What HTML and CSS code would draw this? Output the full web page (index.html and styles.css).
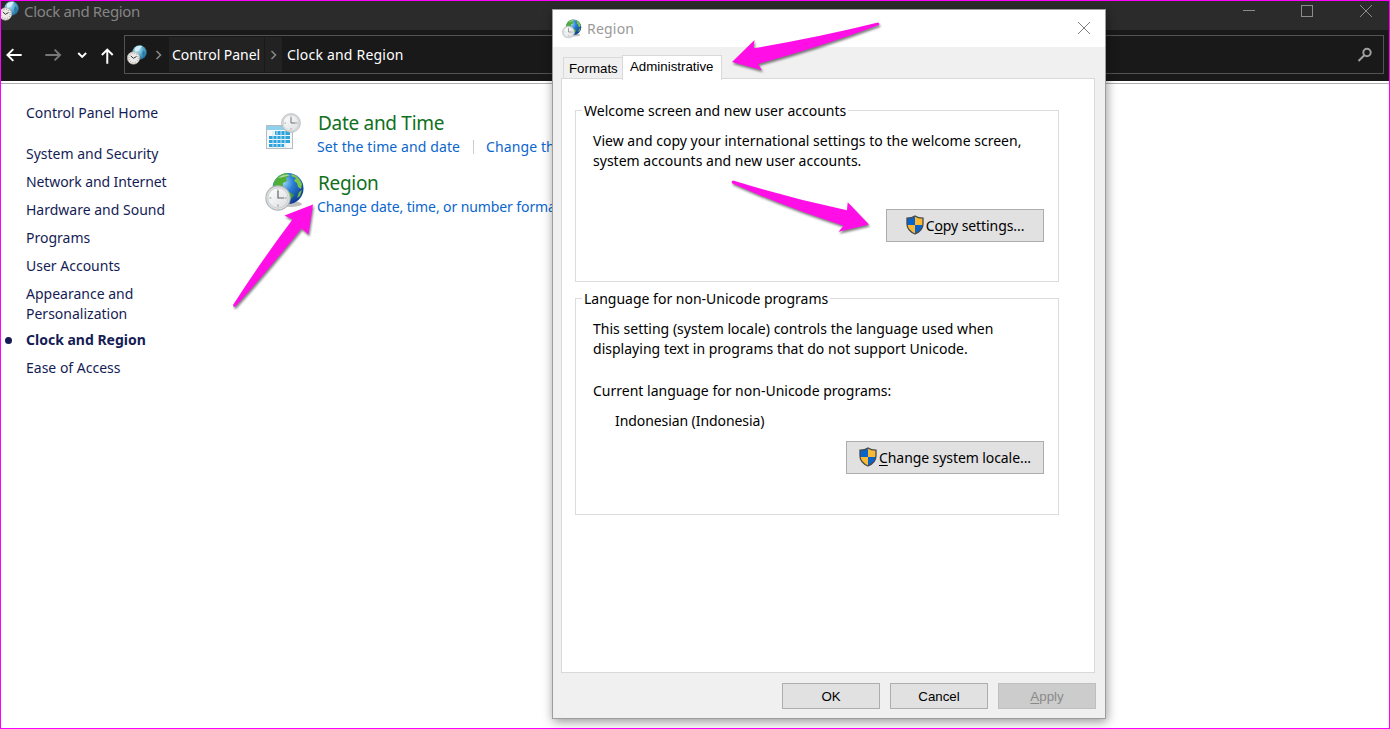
FILE: index.html
```html
<!DOCTYPE html>
<html>
  <head>
    <meta charset="utf-8">
    <title>Clock and Region</title>
    <link rel="stylesheet" href="styles.css">
  </head>
  <body>
    <!-- shared icons -->
    <svg class="icon-defs" width="0" height="0">
      <defs>
        <radialGradient id="sea" cx="0.35" cy="0.3" r="0.8">
          <stop offset="0" stop-color="#9fd8fa"/>
          <stop offset="0.4" stop-color="#2a7fd4"/>
          <stop offset="1" stop-color="#0a2f86"/>
        </radialGradient>
        <radialGradient id="sea-pale" cx="0.35" cy="0.3" r="0.8">
          <stop offset="0" stop-color="#c5e9f5"/>
          <stop offset="0.5" stop-color="#58a9cf"/>
          <stop offset="1" stop-color="#17608c"/>
        </radialGradient>
        <linearGradient id="face" x1="0" y1="0" x2="1" y2="1">
          <stop offset="0" stop-color="#ffffff"/>
          <stop offset="1" stop-color="#dcdee0"/>
        </linearGradient>
        <symbol id="clock" viewBox="0 0 24 24">
          <circle cx="12" cy="12" r="11.2" fill="#dcdedf" stroke="#b0b3b5" stroke-width="1"/>
          <circle cx="12" cy="12" r="9.2" fill="url(#face)" stroke="#c5c8ca" stroke-width="0.6"/>
          <path d="M12 4v2M12 18v2M4 12h2M18 12h2" stroke="#999" stroke-width="1"/>
          <path d="M12 5.5V12h5.500" fill="none" stroke="#666" stroke-width="1.100"/>
        </symbol>
        <symbol id="globe" viewBox="0 0 40 40">
          <ellipse cx="25" cy="32" rx="12" ry="3" fill="#000" opacity="0.25"/>
          <circle cx="23" cy="16.500" r="15.500" fill="url(#sea)"/>
          <path d="M9 10c3-6 8-8.500 13-9l2 3-3 2 1 3-4 2 0 4-4 2-3-1-2 3c-1-3-1-6 0-9z" fill="#4fae36"/>
          <path d="M27 2c5 1.500 8 5 10 10l-1 5-3-2-1-4-3-2 2-3-5-2z" fill="#7bc549"/>
          <path d="M20 21l5-1 4 3-3 4-2 3-3 1-2-5z" fill="#3f9d3a"/>
          <path d="M34 20l3-2-2 6-3 2z" fill="#6cba45"/>
          <path d="M13 6c4-4 10-4 13-3-5 1-10 3-13 3z" fill="#fff" opacity="0.5"/>
          <use href="#clock" x="0" y="13" width="26" height="26"/>
        </symbol>
        <symbol id="globe-pale" viewBox="0 0 20 20">
          <circle cx="12.500" cy="7.500" r="7.200" fill="url(#sea-pale)"/>
          <path d="M8 3c2-2 5-2.500 7-2l-2 3-2 2-3 1z" fill="#d5f1f5"/>
          <path d="M16 5l2 3-1 4-2-3z" fill="#2b7aa5"/>
          <circle cx="6.500" cy="13" r="6.200" fill="#eceae6" stroke="#aaa59e" stroke-width="0.7"/>
          <circle cx="6.500" cy="13" r="4.600" fill="none" stroke="#777" stroke-width="0.8" stroke-dasharray="0.8 1.600"/>
          <path d="M3.800 11L6.500 13.300 9.500 11.500" fill="none" stroke="#333" stroke-width="1"/>
        </symbol>
        <symbol id="shield" viewBox="0 0 18 20">
          <path d="M9 1c2 1.500 5 2.200 8 2.200V9c0 4.500-3.500 8-8 10-4.500-2-8-5.500-8-10V3.200C4 3.200 7 2.500 9 1z" fill="#f9b934"/>
          <path d="M9 1v9H1V3.200C4 3.200 7 2.500 9 1zM9 10h7.900c-.5 4-3.700 7.200-7.900 9z" fill="#0a63c9"/>
          <path d="M9 1c2 1.500 5 2.200 8 2.200V9c0 4.500-3.500 8-8 10-4.500-2-8-5.500-8-10V3.200C4 3.200 7 2.500 9 1z" fill="none" stroke="#47494a" stroke-width="1.300"/>
        </symbol>
      </defs>
    </svg>

    <div class="window">
      <div class="title-bar">
        <svg class="title-icon" width="20" height="20"><use href="#globe-pale"/></svg>
        <span class="title-text">Clock and Region</span>
        <svg class="window-controls" width="130" height="20" viewBox="0 0 130 20" fill="none" stroke="#8c8c8c">
          <path d="M0 9.500h12"/>
          <rect x="58.500" y="4.500" width="11" height="11"/>
          <path d="M117 4l12 12M129 4L117 16"/>
        </svg>
      </div>

      <div class="nav-bar">
        <svg class="nav-arrows" width="124" height="40" viewBox="0 0 124 40" fill="none" stroke="#fff" stroke-width="2">
          <path d="M20 20H6M11.500 14L5.500 20l6 6"/>
          <path d="M44 20h14M53.500 14.500L59 20l-5.500 5.500" stroke="#777"/>
          <path d="M77.500 18l4 4 4-4"/>
          <path d="M107 29V15M101.500 20l5.500-5.500 5.500 5.500"/>
        </svg>
        <div class="address-bar">
          <svg class="address-icon" width="20" height="20"><use href="#globe-pale"/></svg>
          <svg class="chevron first" width="8" height="10" fill="none" stroke="#8a8a8a" stroke-width="1.500"><path d="M1.500 1l4 4-4 4"/></svg>
          <span class="crumb crumb-hover">Control Panel</span>
          <span class="crumb-arrow"><svg class="chevron" width="8" height="10" fill="none" stroke="#8a8a8a" stroke-width="1.500"><path d="M1.500 1l4 4-4 4"/></svg></span>
          <span class="crumb crumb-last">Clock and Region</span>
          <svg class="search-icon" width="16" height="16" fill="none" stroke="#a0a0a0" stroke-width="2"><circle cx="10" cy="5.500" r="3.700"/><path d="M7.300 8.300L1.500 14"/></svg>
        </div>
      </div>

      <div class="content">
        <div class="sidebar">
          <a class="side-link home-link">Control Panel Home</a>
          <a class="side-link">System and Security</a>
          <a class="side-link network-link">Network and Internet</a>
          <a class="side-link">Hardware and Sound</a>
          <a class="side-link">Programs</a>
          <a class="side-link">User Accounts</a>
          <a class="side-link two-lines">Appearance and<br>Personalization</a>
          <a class="side-link is-current">Clock and Region</a>
          <a class="side-link">Ease of Access</a>
        </div>

        <div class="categories">
          <div class="category">
            <svg class="category-icon" width="40" height="40" viewBox="0 0 40 40">
              <rect x="1.500" y="13.500" width="26" height="23" fill="#f6f8f9" stroke="#b5bbc0"/>
              <path d="M2 14h25v4H2z" fill="#8fd0ec"/>
              <path d="M10 19h15v4H10zM4 24h21v3H4zM4 28h21v3H4zM4 32h15v3H4z" fill="#2fa4dc"/>
              <path d="M8 19v17M12 19v17M16 19v17M20 19v17" stroke="#c5e8f7"/>
              <use href="#clock" x="16" y="1" width="20" height="20"/>
            </svg>
            <div>
              <div class="category-name">Date and Time</div>
              <div class="tasks">
                <a>Set the time and date</a>
                <a class="second-task">Change th</a>
              </div>
            </div>
          </div>
          <div class="category">
            <svg class="category-icon" width="40" height="40"><use href="#globe"/></svg>
            <div>
              <div class="category-name">Region</div>
              <div class="tasks region-tasks"><a>Change date, time, or number forma</a></div>
            </div>
          </div>
        </div>
      </div>
    </div>

    <div class="dialog">
      <div class="dialog-title">
        <svg width="20" height="20"><use href="#globe"/></svg>
        <span class="dialog-name">Region</span>
        <svg class="dialog-close" width="14" height="14" stroke="#808080"><path d="M1 1l12 12M13 1L1 13"/></svg>
      </div>

      <div class="tabs">
        <div class="tab">Formats</div>
        <div class="tab is-active">Administrative</div>
      </div>

      <div class="tab-panel">
        <div class="group group-welcome">
          <span class="group-label">Welcome screen and new user accounts</span>
          <p>View and copy your international settings to the welcome screen,<br>system accounts and new user accounts.</p>
          <button type="button" class="shield-button copy-button"><svg width="20" height="20"><use href="#shield"/></svg><span>C<u>o</u>py settings...</span></button>
        </div>
        <div class="group group-language">
          <span class="group-label">Language for non-Unicode programs</span>
          <p>This setting (system locale) controls the language used when<br>displaying text in programs that do not support Unicode.</p>
          <p class="current-label">Current language for non-Unicode programs:</p>
          <p class="current-value">Indonesian (Indonesia)</p>
          <button type="button" class="shield-button locale-button"><svg width="20" height="20"><use href="#shield"/></svg><span><u>C</u>hange system locale...</span></button>
        </div>
      </div>

      <div class="dialog-buttons">
        <button type="button">OK</button>
        <button type="button">Cancel</button>
        <button type="button" disabled><u>A</u>pply</button>
      </div>
    </div>

    <!-- pointer arrows -->
    <svg class="arrows" width="1390" height="729" fill="#ff0fe6">
      <path d="M732 62L754.500 40l-1 8.300Q820 37 878 22.500q2 1 1 2.500Q820 47 758 64l4 6.300z"/>
      <path d="M869 224.500L847.700 202.300l-.7 8Q790 198 733 180.500q-2 1-1 2.800Q785 207 843.500 225.700l-5 6z"/>
      <path d="M313 204.500L284.500 215.500l8 4Q262 260 233 305q0 2 2 2Q270 268 301.500 228.500l7 6z"/>
    </svg>
  </body>
</html>
```
FILE: styles.css
```css
* {
  box-sizing: border-box;
}
body {
  margin: 0;
  font-family: "Noto Sans", "Open Sans", sans-serif;
  font-size: 14px;
  line-height: 20px;
  overflow: hidden;
}
.icon-defs {
  position: absolute;
}
.window {
  width: 1390px;
  height: 729px;
  border: 1px solid #ff00ff;
  background-color: white;
  overflow: hidden;
}
.title-bar {
  display: flex;
  height: 29px;
  background-color: #2b2b2b;
  color: #858585;
}
.title-icon {
  margin-left: -2px;
}
.title-text {
  margin-left: 5px;
  font-size: 15px;
  letter-spacing: -0.35px;
}
.window-controls {
  margin-left: auto;
  margin-right: 16px;
}
.nav-bar {
  display: flex;
  height: 51px;
  padding-top: 5px;
  background-color: #191919;
}
.nav-arrows {
  flex: none;
  width: 123px;
  padding-left: 1px;
}
.address-bar {
  display: flex;
  align-items: center;
  width: 1260px;
  height: 39px;
  border: 1px solid #535353;
  color: white;
}
.address-icon {
  margin-left: 2px;
}
.chevron.first {
  margin-left: 8px;
  margin-right: 6px;
}
.crumb {
  height: 35px;
  line-height: 35px;
  padding-left: 3px;
}
.crumb-hover {
  width: 95px;
  letter-spacing: -0.05px;
  background-color: #222222;
}
.crumb-last {
  letter-spacing: 0.2px;
}
.crumb-arrow {
  display: flex;
  align-items: center;
  justify-content: center;
  width: 17px;
  height: 35px;
  margin-left: 1px;
  margin-right: 2px;
  background-color: #222222;
}
.search-icon {
  margin-left: auto;
  margin-right: 10px;
}
.content {
  display: flex;
  height: 645px;
  margin-top: 2px;
  border-top: 1px solid #b0b0b0;
}
.sidebar {
  display: flex;
  flex-direction: column;
  gap: 8px;
  width: 264px;
  padding-left: 25px;
  padding-top: 19px;
  color: #151c55;
}
.home-link {
  margin-bottom: 13px;
}
.network-link {
  letter-spacing: -0.1px;
}
.two-lines {
  margin-bottom: -2px;
}
.is-current {
  display: flex;
  align-items: center;
  margin-left: -21px;
  font-weight: bold;
}
.is-current::before {
  content: "";
  width: 7px;
  height: 7px;
  margin-right: 14px;
  border-radius: 50%;
  background-color: #151c55;
}
.categories {
  padding-top: 28px;
}
.category {
  display: flex;
  height: 60px;
}
.category-icon {
  margin-right: 12px;
}
.category-name {
  height: 25px;
  line-height: 23px;
  margin-left: 1px;
  font-size: 19px;
  letter-spacing: -0.3px;
  color: #0f7020;
}
.tasks {
  display: flex;
  letter-spacing: 0.1px;
  color: #0b66cc;
  white-space: nowrap;
}
.region-tasks {
  letter-spacing: -0.1px;
}
.second-task {
  margin-left: 13px;
  padding-left: 13px;
  background: linear-gradient(#cccccc, #cccccc) left center / 1px 14px no-repeat;
}
.dialog {
  position: absolute;
  left: 552px;
  top: 9px;
  width: 554px;
  height: 710px;
  border: 1px solid #9d9d9d;
  background-color: #f0f0f0;
  color: black;
  box-shadow: 1px 3px 10px rgba(0, 0, 0, 0.4);
}
.dialog-title {
  display: flex;
  align-items: center;
  height: 37px;
  padding-left: 9px;
  padding-right: 14px;
  background-color: white;
}
.dialog-name {
  margin-left: 5px;
  letter-spacing: 0.2px;
  color: #999999;
}
.dialog-close {
  margin-left: auto;
  margin-bottom: 1px;
}
.tabs {
  display: flex;
  align-items: flex-end;
  height: 32px;
  margin-left: 10px;
  font-family: "Liberation Sans", Arial, sans-serif;
  font-size: 13.3px;
}
.tab {
  width: 59px;
  height: 22px;
  padding-left: 5px;
  line-height: 21px;
  border: 1px solid #d9d9d9;
  border-right: none;
  border-bottom: none;
}
.tab.is-active {
  position: relative;
  width: 100px;
  height: 25px;
  margin-bottom: -1px;
  padding-left: 7px;
  line-height: 22px;
  border-right: 1px solid #d9d9d9;
  background-color: white;
}
.tab-panel {
  width: 534px;
  height: 595px;
  margin-left: 8px;
  margin-top: -1px;
  padding: 31px 13px;
  border: 1px solid #d9d9d9;
  background-color: white;
}
.group {
  display: flex;
  flex-direction: column;
  align-items: flex-start;
  width: 484px;
  padding: 0 14px 0 17px;
  border: 1px solid #dcdcdc;
}
.group-welcome {
  height: 172px;
  margin-bottom: 16px;
}
.group-language {
  height: 217px;
}
.group-label {
  height: 20px;
  margin-top: -10px;
  margin-left: -11px;
  padding: 0 2px;
  background-color: white;
}
.group p {
  margin: 10px 0 0;
  letter-spacing: 0.02px;
  white-space: nowrap;
}
.group .current-label {
  margin-top: 22px;
  letter-spacing: 0;
}
.group .current-value {
  margin-left: 22px;
  letter-spacing: -0.08px;
}
button {
  font-family: "Liberation Sans", Arial, sans-serif;
  font-size: 13.3px;
  padding: 0;
  border: 1px solid #adadad;
  background-color: #e1e1e1;
  color: black;
}
button u {
  text-underline-offset: 2px;
}
.shield-button {
  display: flex;
  align-items: center;
  justify-content: center;
  height: 33px;
  margin-left: auto;
  font-family: "Noto Sans", "Open Sans", sans-serif;
  font-size: 14px;
  letter-spacing: -0.08px;
}
.shield-button svg {
  margin-top: -2px;
  margin-left: -1px;
  margin-right: 1px;
}
.copy-button {
  width: 158px;
  margin-top: 38px;
}
.locale-button {
  width: 198px;
  margin-top: 10px;
}
.dialog-buttons {
  display: flex;
  justify-content: flex-end;
  gap: 10px;
  margin-top: 10px;
  margin-right: 9px;
}
.dialog-buttons button {
  width: 98px;
  height: 26px;
}
.dialog-buttons button:disabled {
  border-color: #bfbfbf;
  background-color: #cccccc;
  color: #8a8a8a;
}
.arrows {
  position: absolute;
  left: 0;
  top: 0;
  filter: drop-shadow(1px 2px 1px rgba(0, 0, 0, 0.5));
}
```
